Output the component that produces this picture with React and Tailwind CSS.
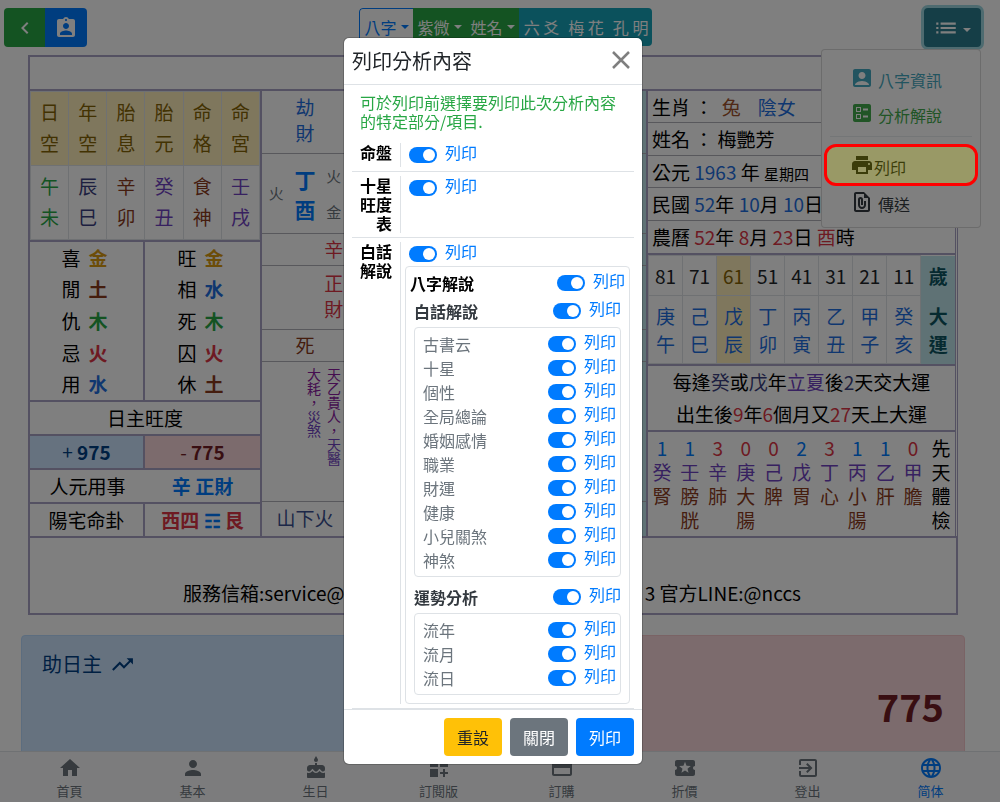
import React, { useState } from 'react';
import {
  MdAccountBox,
  MdAssignmentInd,
  MdBallot,
  MdCake,
  MdChevronLeft,
  MdDashboardCustomize,
  MdExitToApp,
  MdHome,
  MdLanguage,
  MdList,
  MdLocalPlay,
  MdOutlineCreditCard,
  MdOutlineFilePresent,
  MdPerson,
  MdPrint,
  MdTrendingUp,
} from 'react-icons/md';

const stars = [
  { head: '日空', value: '午未', color: 'text-[#28a745]' },
  { head: '年空', value: '辰巳', color: 'text-[#3a3f80]' },
  { head: '胎息', value: '辛卯', color: 'text-[#8b3a1c]' },
  { head: '胎元', value: '癸丑', color: 'text-[#6f42c1]' },
  { head: '命格', value: '食神', color: 'text-[#8b3a1c]' },
  { head: '命宮', value: '壬戌', color: 'text-[#6f42c1]' },
];

const gold = 'text-[#d99a10]';
const earth = 'text-[#8b3a1c]';
const wood = 'text-[#28a745]';
const fire = 'text-[#dc3545]';
const water = 'text-[#1f6fe0]';

const likes = [
  ['喜', '金', gold],
  ['閒', '土', earth],
  ['仇', '木', wood],
  ['忌', '火', fire],
  ['用', '水', water],
];

const seasons = [
  ['旺', '金', gold],
  ['相', '水', water],
  ['死', '木', wood],
  ['囚', '火', fire],
  ['休', '土', earth],
];

const luck = [
  [81, '庚午'],
  [71, '己巳'],
  [61, '戊辰'],
  [51, '丁卯'],
  [41, '丙寅'],
  [31, '乙丑'],
  [21, '甲子'],
  [11, '癸亥'],
];

const organs = [
  [1, '癸', '腎'],
  [1, '壬', '膀胱'],
  [3, '辛', '肺'],
  [0, '庚', '大腸'],
  [0, '己', '脾'],
  [2, '戊', '胃'],
  [3, '丁', '心'],
  [1, '丙', '小腸'],
  [1, '乙', '肝'],
  [0, '甲', '膽'],
];

const navItems = [
  { label: '首頁', icon: MdHome },
  { label: '基本', icon: MdPerson },
  { label: '生日', icon: MdCake },
  { label: '訂閱版', icon: MdDashboardCustomize },
  { label: '訂購', icon: MdOutlineCreditCard },
  { label: '折價', icon: MdLocalPlay },
  { label: '登出', icon: MdExitToApp },
  { label: '简体', icon: MdLanguage, active: true },
];

const plainItems = ['古書云', '十星', '個性', '全局總論', '婚姻感情', '職業', '財運', '健康', '小兒關煞', '神煞'];
const fortuneItems = ['流年', '流月', '流日'];

const Caret = () => (
  <span className="border-x-4 border-t-4 border-x-transparent border-t-current" />
);

// Stacks each character on its own line
const Stack = ({ text, className = '' }) => (
  <span className={`flex flex-col items-center ${className}`}>
    {[...text].map((ch, i) => (
      <span key={i}>{ch}</span>
    ))}
  </span>
);

const Tab = ({ label, caret, className }) => (
  <button className={`flex items-center gap-1 whitespace-nowrap pl-[5px] pr-1 ${className}`}>
    {label}
    {caret && <Caret />}
  </button>
);

const MenuItem = ({ icon: Icon, label, className }) => (
  <a href="#" className={`flex h-[35px] items-center pl-5 text-base ${className}`}>
    <Icon size={24} className="mb-1" />
    <span>{label}</span>
  </a>
);

const Header = () => (
  <header className="flex items-start justify-between px-1 pt-2">
    <div className="flex overflow-hidden rounded text-white">
      <button className="flex h-[39px] w-[41px] items-center justify-center bg-[#28a745]" aria-label="back">
        <MdChevronLeft size={24} />
      </button>
      <button className="flex h-[39px] w-[42px] items-center justify-center bg-[#007bff]" aria-label="profile">
        <MdAssignmentInd size={24} />
      </button>
    </div>

    <nav className="flex h-[38px] overflow-hidden rounded text-base text-white">
      <Tab label="八字" caret className="rounded-l border border-r-0 border-[#007bff] text-[#007bff]" />
      <Tab label="紫微" caret className="bg-[#28a745]" />
      <Tab label="姓名" caret className="bg-[#28a745]" />
      <Tab label="六 爻" className="bg-[#17a2b8]" />
      <Tab label="梅 花" className="bg-[#17a2b8]" />
      <Tab label="孔 明" className="bg-[#17a2b8]" />
    </nav>

    <div className="relative">
      <button
        className="flex h-[39px] w-[57px] items-center justify-center gap-1 rounded bg-[#2a7c8e] text-white ring-3 ring-[#9cd7e1]"
        aria-label="menu"
      >
        <MdList size={26} />
        <span className="flex pt-1"><Caret /></span>
      </button>
      <div className="absolute right-0 top-full z-10 mt-0.5 w-40 rounded border border-black/15 bg-white px-2 pb-1.5 pt-3">
        <MenuItem icon={MdAccountBox} label="八字資訊" className="gap-1 text-[#45a8c0]" />
        <MenuItem icon={MdBallot} label="分析解說" className="gap-1 text-[#43ab4c]" />
        <hr className="mb-3 mt-1 border-[#e9ecef]" />
        <div className="flex flex-col gap-0.5">
          <MenuItem icon={MdPrint} label="列印" className="text-[#16181b]" />
          <MenuItem icon={MdOutlineFilePresent} label="傳送" className="gap-1 text-[#343a40]" />
        </div>
      </div>
    </div>
  </header>
);

const LeftPanel = () => (
  <div className="w-[232px] border-r-2 border-[#a8a2c4]">
    <table className="w-full table-fixed border-collapse text-center leading-[31px]">
      <tbody>
        <tr className="h-[74px]">
          {stars.map((s, i) => (
            <td key={i} className="border border-[#dee2e6] bg-[#ffeeba] pt-1 align-top text-[#856404]">
              <Stack text={s.head} />
            </td>
          ))}
        </tr>
        <tr className="h-[74px]">
          {stars.map((s, i) => (
            <td key={i} className={`border border-[#dee2e6] pt-1 align-top ${s.color}`}>
              <Stack text={s.value} />
            </td>
          ))}
        </tr>
      </tbody>
    </table>
    <div className="grid grid-cols-2 divide-x-2 divide-[#a8a2c4] border-y-2 border-[#a8a2c4] text-center leading-[30px]">
      {[likes, seasons].map((list, i) => (
        <div key={i} className="h-[158px] pr-1">
          {list.map(([name, element, color]) => (
            <div key={name} className="flex h-1/5 items-center justify-center gap-2">
              <span>{name}</span>
              <b className={color}>{element}</b>
            </div>
          ))}
        </div>
      ))}
    </div>
    <div className="divide-y-2 divide-[#a8a2c4] text-center leading-8">
      <div>日主旺度</div>
      <div className="grid grid-cols-2 divide-x-2 divide-[#a8a2c4]">
        <div className="bg-[#cce5ff] text-[#004085]">+ <b>975</b></div>
        <div className="bg-[#f8d7da] text-[#721c24]">- <b>775</b></div>
      </div>
      <div className="grid grid-cols-2">
        <span>人元用事</span>
        <b className="text-[#007bff]">辛 正財</b>
      </div>
      <div className="grid grid-cols-2 divide-x-2 divide-[#a8a2c4]">
        <span>陽宅命卦</span>
        <b className="text-[#dc3545]">西四 <span className="text-[#007bff]">☶</span> 艮</b>
      </div>
    </div>
  </div>
);

const DayPillar = () => (
  <div className="divide-y divide-[#b0b0b8]">
    <div className="flex h-[63px] items-center justify-center pb-1 leading-[26px] text-[#1f6fe0]">
      <Stack text="劫財" />
    </div>
    <div className="grid h-20 grid-cols-3 items-center text-center">
      <span className="text-[15px] text-[#6c757d]">火</span>
      <b className="text-[21px] leading-[30px] text-[#007bff]"><Stack text="丁酉" /></b>
      <span className="text-[15px] leading-9 text-[#6c757d]"><Stack text="火金" /></span>
    </div>
    <div className="grid h-8 grid-cols-3 items-center text-center text-[#dc3545]">
      <span className="col-start-3">辛</span>
    </div>
    <div className="grid h-16 grid-cols-3 items-center pb-1 text-center leading-[26px] text-[#dc3545]">
      <Stack text="正財" className="col-start-3" />
    </div>
    <div className="flex h-8 items-center justify-center text-[#8b3a1c]">死</div>
    <div className="flex h-[140px] justify-end pr-1 pt-1.5 text-sm leading-5 text-[#8a1aa0]">
      <div className="[writing-mode:vertical-rl]">
        <p>天乙貴人，<span className="text-[#6f42c1]">天醫</span></p>
        <p>大耗，<span className="text-[#6f42c1]">災煞</span></p>
      </div>
    </div>
    <div className="flex h-[33px] items-center justify-center text-[#3a4f90]">山下火</div>
  </div>
);

const EmptyPillar = ({ className = '' }) => (
  <div className={`divide-y divide-[#b0b0b8] ${className}`}>
    <div className="h-[63px]" />
    <div className="h-20" />
    <div className="h-8" />
    <div className="h-16" />
    <div className="h-8" />
    <div className="h-[140px]" />
    <div className="h-[33px]" />
  </div>
);

const RightPanel = () => (
  <div className="mr-px w-[310px] border-l-2 border-r border-[#a8a2c4]">
    <div className="flex h-[164px] flex-col divide-y divide-[#b0b0b8] border-b-2 border-[#a8a2c4] leading-[31px] [&>p]:h-1/5 [&>p]:whitespace-pre [&>p]:pl-1">
      <p>生肖 ：  <span className="text-[#a0522d]">兔</span>    <span className="text-[#1f6fe0]">陰女</span></p>
      <p>姓名 ： 梅艷芳</p>
      <p>公元 <span className="text-[#1f6fe0]">1963</span> 年 <span className="text-[15px]">星期四</span></p>
      <p>
        民國 <span className="text-[#1f6fe0]">52</span>年 <span className="text-[#1f6fe0]">10</span>月{' '}
        <span className="text-[#1f6fe0]">10</span>日
      </p>
      <p>
        農曆 <span className="text-[#dc3545]">52</span>年 <span className="text-[#dc3545]">8</span>月{' '}
        <span className="text-[#dc3545]">23</span>日 <span className="text-[#dc3545]">酉</span>時
      </p>
    </div>
    <table className="w-full table-fixed border-collapse text-center leading-7">
      <tbody>
        <tr className="h-10">
          {luck.map(([age]) => (
            <td
              key={age}
              className={`border border-[#dee2e6] ${age === 61 ? 'bg-[#ffeeba] text-[#856404]' : 'text-[#212529]'}`}
            >
              {age}
            </td>
          ))}
          <th className="bg-[#bee5eb] text-[#0c5460]">歲</th>
        </tr>
        <tr className="h-[68px]">
          {luck.map(([age, pillar]) => (
            <td key={age} className={`border border-[#dee2e6] text-[#1f6fe0] ${age === 61 ? 'bg-[#ffeeba]' : ''}`}>
              <Stack text={pillar} />
            </td>
          ))}
          <th className="bg-[#bee5eb] text-[#0c5460]"><Stack text="大運" /></th>
        </tr>
      </tbody>
    </table>
    <div className="border-y-2 border-[#a8a2c4] text-center leading-8">
      <p>
        每逢<span className="text-[#3a3f80]">癸</span>或<span className="text-[#3a3f80]">戊</span>年
        <span className="text-[#6f42c1]">立夏</span>後<span className="text-[#3a3f80]">2</span>天交大運
      </p>
      <p>
        出生後<span className="text-[#dc3545]">9</span>年<span className="text-[#dc3545]">6</span>個月又
        <span className="text-[#dc3545]">27</span>天上大運
      </p>
    </div>
    <div className="grid grid-cols-11 pt-1 text-center leading-6">
      {organs.map(([count, stem, organ]) => (
        <div key={stem}>
          <div className={count === 1 || count === 2 ? 'text-[#007bff]' : 'text-[#dc3545]'}>{count}</div>
          <div className="text-[#6f42c1]">{stem}</div>
          <Stack text={organ} className="text-[#8b3a1c]" />
        </div>
      ))}
      <Stack text="先天體檢" />
    </div>
  </div>
);

const Chart = () => (
  <section className="ml-7 mr-[27px] mt-2 border-2 border-r border-[#a8a2c4] text-[19px] text-black">
    <div className="h-8" />
    <div className="flex border-y-2 border-[#a8a2c4]">
      <LeftPanel />
      <div className="grid flex-1 grid-cols-[1fr_1fr_1fr_1fr_40px]">
        <DayPillar />
        <EmptyPillar />
        <EmptyPillar />
        <EmptyPillar />
        <EmptyPillar className="bg-[#bee5eb]" />
      </div>
      <RightPanel />
    </div>
    <div className="flex h-[75px] items-end justify-between border-r border-[#a8a2c4] pb-1 pl-[153px] pr-[155px] leading-8">
      <span>服務信箱:service@</span>
      <span>3 官方LINE:@nccs</span>
    </div>
  </section>
);

const Strength = () => (
  <section className="ml-[21px] mr-5 mt-5 grid grid-cols-2">
    <div className="h-40 rounded border border-[#b8daff] bg-[#cce5ff] px-5 pt-3 text-[#004085]">
      <div className="flex items-center gap-2 text-xl leading-8">
        助日主
        <MdTrendingUp size={25} />
      </div>
    </div>
    <div className="h-40 rounded border border-[#f5c6cb] bg-[#f8d7da] px-5 pt-10 text-right text-[38px] font-bold leading-[60px] text-[#721c24]">
      775
    </div>
  </section>
);

const BottomNav = () => (
  <nav className="fixed inset-x-0 bottom-0 flex border-t border-[#dee2e6] bg-[#f8f9fa] px-2 pt-1">
    {navItems.map(({ label, icon: Icon, active }) => (
      <a
        key={label}
        href="#"
        className={`flex flex-1 flex-col items-center text-[13px] leading-[22px] ${active ? 'text-[#007bff]' : 'text-[#6c757d]'}`}
      >
        <Icon size={24} />
        {label}
      </a>
    ))}
  </nav>
);

const PrintSwitch = () => {
  const [on, setOn] = useState(true);

  return (
    <label className="flex h-6 gap-2 leading-[19px] text-[#007bff]">
      <input
        type="checkbox"
        checked={on}
        onChange={() => setOn(!on)}
        className="mt-1 h-4 w-7 appearance-none rounded-full bg-[#adb5bd] p-0.5 before:block before:size-3 before:rounded-full before:bg-white checked:bg-[#007bff] checked:before:ml-3"
      />
      列印
    </label>
  );
};

const SwitchRow = ({ label, className = '' }) => (
  <div className={`flex justify-between leading-6 ${className}`}>
    <span>{label}</span>
    <PrintSwitch />
  </div>
);

const SwitchList = ({ items }) => (
  <div className="mt-1 rounded border border-[#dee2e6] py-1 pl-2 pr-1 text-[#6c757d]">
    {items.map(item => (
      <SwitchRow key={item} label={item} />
    ))}
  </div>
);

const OptionRow = ({ title, children }) => (
  <div className="flex border-b border-[#dee2e6] py-1">
    <div className="w-[49px] border-r border-[#dee2e6] pl-2 pr-2 text-right font-bold leading-[19px] text-black">
      {title}
    </div>
    <div className="flex-1 px-1">
      <div className="pl-1">
        <PrintSwitch />
      </div>
      {children}
    </div>
  </div>
);

const PrintModal = () => (
  <div className="fixed inset-0 z-20 bg-black/50 pr-3.5">
    <div
      role="dialog"
      aria-modal="true"
      aria-labelledby="print-title"
      className="mx-auto mt-[37px] w-[300px] rounded-md border border-black/20 bg-white bg-clip-padding text-base text-[#212529]"
    >
      <div className="flex h-[47px] items-center justify-between border-b border-[#dee2e6] px-2">
        <h5 id="print-title" className="text-xl">列印分析內容</h5>
        <button aria-label="close" className="text-[#7f7f7f]">
          <svg width="24" height="24" viewBox="0 0 24 24" fill="none" stroke="currentColor" strokeWidth="2.5">
            <path d="M3 3l16 16M19 3L3 19" />
          </svg>
        </button>
      </div>
      <div className="px-2 pt-2">
        <p className="mb-2 px-2 leading-[19px] text-[#28a745]">
          可於列印前選擇要列印此次分析內容的特定部分/項目.
        </p>
        <OptionRow title="命盤" />
        <OptionRow title="十星旺度表" />
        <OptionRow title="白話解說">
          <div className="rounded border border-[#dee2e6] p-1 pb-2">
            <SwitchRow label="八字解說" className="font-bold text-black [&>label]:font-normal" />
            <div className="px-1 pt-1">
              <SwitchRow label="白話解說" className="font-bold text-[#343a40] [&>label]:font-normal" />
            </div>
            <div className="px-1">
              <SwitchList items={plainItems} />
            </div>
            <div className="px-1 pt-2">
              <SwitchRow label="運勢分析" className="font-bold text-[#343a40] [&>label]:font-normal" />
              <SwitchList items={fortuneItems} />
            </div>
          </div>
        </OptionRow>
      </div>
      <div className="flex justify-end gap-2 border-t border-[#dee2e6] p-2">
        <button className="h-[38px] rounded bg-[#ffc107] px-[13px] text-[#212529]">重設</button>
        <button className="h-[38px] rounded bg-[#6c757d] px-[13px] text-white">關閉</button>
        <button className="h-[38px] rounded bg-[#007bff] px-[13px] text-white">列印</button>
      </div>
    </div>
    {/* Marks the menu entry that opened the dialog */}
    <div className="absolute right-[22px] top-36 h-[42px] w-[154px] rounded-xl border-3 border-[#ff0000] bg-[#ffff00]/20" />
  </div>
);

const App = () => (
  <div className="h-screen overflow-hidden bg-white pr-[15px] font-['Noto_Sans_CJK_TC','Noto_Sans_CJK_SC',sans-serif]">
    <Header />
    <Chart />
    <Strength />
    <BottomNav />
    <PrintModal />
  </div>
);

export default App;
